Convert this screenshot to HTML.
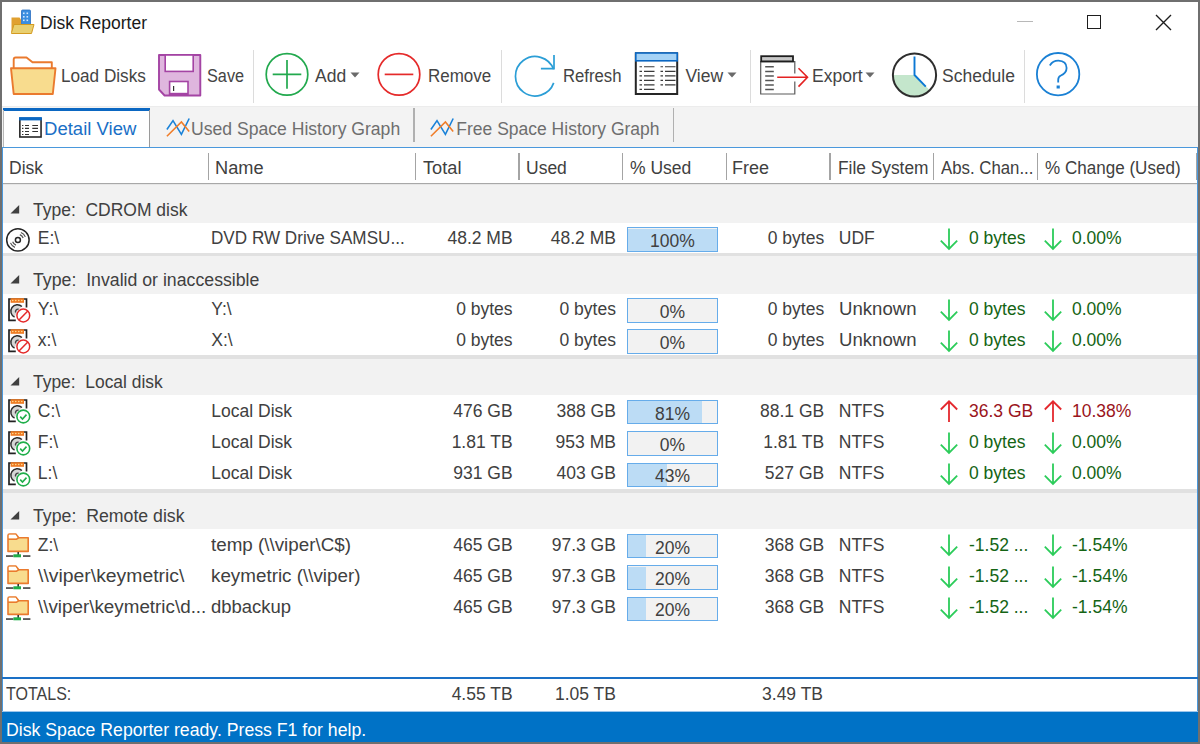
<!DOCTYPE html>
<html><head><meta charset="utf-8"><title>Disk Reporter</title>
<style>
html,body{margin:0;padding:0;}
body{width:1200px;height:744px;position:relative;overflow:hidden;background:#fff;font-family:"Liberation Sans",sans-serif;}
.t{position:absolute;white-space:pre;}
.r{position:absolute;}
svg.r{overflow:visible;}
</style></head><body>
<div class="r" style="left:0.00px;top:0.00px;width:1200.00px;height:744.00px;background:#ffffff;"></div>
<svg class="r" style="left:8px;top:6px" width="30" height="32" viewBox="0 0 30 32">
<rect x="13.5" y="4" width="9" height="19" rx="1" fill="#3a8ee0" stroke="#2a6fc0" stroke-width="0.8"/>
<g fill="#cfe6ff"><rect x="15" y="6.5" width="1.6" height="1.6"/><rect x="18.5" y="6.5" width="1.6" height="1.6"/>
<rect x="15" y="10" width="1.6" height="1.6"/><rect x="18.5" y="10" width="1.6" height="1.6"/>
<rect x="15" y="13.5" width="1.6" height="1.6"/><rect x="18.5" y="13.5" width="1.6" height="1.6"/></g>
<path d="M3.5 11.5 h8 l1.5 2 v13 h-9.5 z" fill="#e0a030"/>
<path d="M3.5 26.5 L6 18.5 H26 L23.5 27.5 H3.5 Z" fill="#e8cf70" stroke="#d49a20" stroke-width="1"/>
</svg>
<div class="t" style="left:40.00px;top:14.60px;font-size:17.5px;line-height:17.5px;color:#1a1a1a;">Disk Reporter</div>
<div class="r" style="left:1017.00px;top:21.00px;width:16.00px;height:1.20px;background:#b8b8b8;"></div>
<div class="r" style="left:1086.50px;top:14.50px;width:14.00px;height:14.00px;background:transparent;border:1.6px solid #1e1e1e;box-sizing:border-box;"></div>
<svg class="r" style="left:1155px;top:13.5px" width="17" height="17" viewBox="0 0 17 17"><path d="M1 1 L16 16 M16 1 L1 16" stroke="#1e1e1e" stroke-width="1.4"/></svg>
<svg class="r" style="left:5px;top:48px" width="56" height="52" viewBox="0 0 56 52">
<path d="M8.7 20 V11.5 q0 -2 2 -2 H21.5 L27.5 14.3 H46.8 V20" fill="#fff" stroke="#ea7a2e" stroke-width="1.9" stroke-linejoin="round"/>
<path d="M6 20.3 H50.5 L47.8 46 H8.7 Z" fill="#f8dc8e" stroke="#ea7a2e" stroke-width="1.9" stroke-linejoin="round"/>
</svg>
<div class="t" style="left:60.80px;top:68.20px;font-size:17.5px;line-height:17.5px;color:#444;transform:scaleX(0.98);transform-origin:left 0;">Load Disks</div>
<svg class="r" style="left:150px;top:48px" width="56" height="52" viewBox="0 0 56 52">
<path d="M9 7 H50.3 V47.5 H14.6 L9 41.5 Z" fill="#dfb6de" stroke="#a444a4" stroke-width="1.9" stroke-linejoin="round"/>
<rect x="15.2" y="7" width="28" height="16.4" fill="#fff" stroke="#a444a4" stroke-width="1.6"/>
<rect x="19.6" y="33.5" width="18.4" height="13.5" fill="#fff" stroke="#a444a4" stroke-width="1.6"/>
<rect x="19.6" y="44.8" width="18.4" height="2.6" fill="#a444a4"/>
<rect x="23" y="38" width="1.2" height="5" fill="#333"/>
</svg>
<div class="t" style="left:207.00px;top:68.20px;font-size:17.5px;line-height:17.5px;color:#444;transform:scaleX(0.93);transform-origin:left 0;">Save</div>
<div class="r" style="left:253.00px;top:50.00px;width:1.00px;height:53.00px;background:#dcdcdc;"></div>
<div class="r" style="left:501.00px;top:50.00px;width:1.00px;height:53.00px;background:#dcdcdc;"></div>
<div class="r" style="left:750.00px;top:50.00px;width:1.00px;height:53.00px;background:#dcdcdc;"></div>
<div class="r" style="left:1024.00px;top:50.00px;width:1.00px;height:53.00px;background:#dcdcdc;"></div>
<svg class="r" style="left:262px;top:50px" width="50" height="50" viewBox="0 0 50 50">
<circle cx="25" cy="24.4" r="20.8" fill="none" stroke="#22a94e" stroke-width="1.7"/>
<path d="M10.7 24.4 H39.3 M25 10 V38.7" stroke="#22a94e" stroke-width="1.7"/>
</svg>
<div class="t" style="left:315.00px;top:68.20px;font-size:17.5px;line-height:17.5px;color:#444;">Add</div>
<svg class="r" style="left:350px;top:72px" width="10" height="6" viewBox="0 0 10 6"><path d="M0.5 0.5 H9.5 L5 5.5 Z" fill="#6a6a6a"/></svg>
<svg class="r" style="left:374px;top:50px" width="50" height="50" viewBox="0 0 50 50">
<circle cx="25" cy="24.4" r="20.8" fill="none" stroke="#e52a2a" stroke-width="1.7"/>
<path d="M10.7 24.4 H39.3" stroke="#e52a2a" stroke-width="1.7"/>
</svg>
<div class="t" style="left:427.50px;top:68.20px;font-size:17.5px;line-height:17.5px;color:#444;transform:scaleX(0.97);transform-origin:left 0;">Remove</div>
<svg class="r" style="left:510px;top:50.7px" width="50" height="50" viewBox="0 0 50 50">
<path d="M43.6 18.3 A19.7 19.7 0 1 0 43.7 31.9" fill="none" stroke="#2b9ed6" stroke-width="1.7"/>
<path d="M44 3.9 V17.6 H30.9" fill="none" stroke="#2b9ed6" stroke-width="1.7"/>
</svg>
<div class="t" style="left:563.30px;top:68.20px;font-size:17.5px;line-height:17.5px;color:#444;transform:scaleX(0.955);transform-origin:left 0;">Refresh</div>
<svg class="r" style="left:630px;top:48px" width="54" height="52" viewBox="0 0 54 52">
<rect x="5.8" y="5.4" width="41.4" height="40.6" fill="#fff" stroke="#262626" stroke-width="2"/>
<rect x="5.8" y="5" width="41.4" height="7.8" fill="#a4d2f6" stroke="#0b67c2" stroke-width="1.6"/>
<g stroke="#3a3a3a" stroke-width="1.15">
<path d="M9.5 18.7 H12 M14 18.7 H24.5 M30.5 18.7 H33 M35 18.7 H45.5"/>
<path d="M9.5 23.4 H12 M14 23.4 H24.5 M30.5 23.4 H33 M35 23.4 H45.5"/>
<path d="M9.5 27.9 H12 M14 27.9 H24.5 M30.5 27.9 H33 M35 27.9 H45.5"/>
<path d="M9.5 32.4 H12 M14 32.4 H24.5 M30.5 32.4 H33 M35 32.4 H45.5"/>
<path d="M9.5 36.9 H12 M14 36.9 H24.5 M30.5 36.9 H33 M35 36.9 H45.5"/>
<path d="M9.5 41.4 H12 M14 41.4 H24.5"/>
</g>
</svg>
<div class="t" style="left:685.50px;top:68.20px;font-size:17.5px;line-height:17.5px;color:#444;">View</div>
<svg class="r" style="left:727px;top:72px" width="10" height="6" viewBox="0 0 10 6"><path d="M0.5 0.5 H9.5 L5 5.5 Z" fill="#6a6a6a"/></svg>
<svg class="r" style="left:752px;top:46px" width="60" height="54" viewBox="0 0 60 54">
<path d="M42.8 27.5 V15.6 H8.7 V48 H42.8 V35.4" fill="#fff" stroke="#5a5a5a" stroke-width="1.2"/>
<rect x="9.2" y="10.2" width="31.8" height="5.2" fill="#c8c8c8" stroke="#1e1e1e" stroke-width="1.8"/>
<g stroke="#555" stroke-width="1.5"><path d="M13.2 20.7 H21.8 M13.2 25.4 H21.8 M13.2 29.9 H21.8 M13.2 34.4 H21.8 M13.2 38.9 H21.8 M13.2 43.4 H21.8"/></g>
<path d="M25.2 31.2 H55.5 M46.5 22.3 L55.5 31.2 L46.5 40.6" fill="none" stroke="#e42222" stroke-width="1.6"/>
</svg>
<div class="t" style="left:812.00px;top:68.20px;font-size:17.5px;line-height:17.5px;color:#444;">Export</div>
<svg class="r" style="left:865px;top:72px" width="10" height="6" viewBox="0 0 10 6"><path d="M0.5 0.5 H9.5 L5 5.5 Z" fill="#6a6a6a"/></svg>
<svg class="r" style="left:888px;top:48px" width="54" height="54" viewBox="0 0 54 54">
<path d="M26.5 27 H4.9 A21.6 21.6 0 0 0 41.8 42.3 Z" fill="#c4e6cc"/>
<circle cx="26.5" cy="27" r="21.6" fill="none" stroke="#2e2e2e" stroke-width="2"/>
<path d="M26.5 8.5 V27 L37.8 38.7" fill="none" stroke="#0b78d4" stroke-width="1.9"/>
</svg>
<div class="t" style="left:942.00px;top:68.20px;font-size:17.5px;line-height:17.5px;color:#444;">Schedule</div>
<svg class="r" style="left:1032px;top:48px" width="54" height="54" viewBox="0 0 54 54">
<circle cx="26.1" cy="26.2" r="21.2" fill="none" stroke="#1a80d4" stroke-width="1.8"/>
<path d="M17.8 17.4 Q21 12.6 26.4 12.7 Q34.5 13 34.6 20 Q34.6 25 28.5 27.8 Q26.2 29 26.2 32 V34.5" fill="none" stroke="#1a80d4" stroke-width="1.8"/>
<rect x="24.6" y="37.5" width="3.2" height="3" fill="#1a80d4"/>
</svg>
<div class="r" style="left:2.00px;top:106.50px;width:1196.00px;height:41.00px;background:#f3f3f3;"></div>
<div class="r" style="left:2.00px;top:106.00px;width:1196.00px;height:1.00px;background:#ececec;"></div>
<div class="r" style="left:3.00px;top:108.00px;width:147.00px;height:40.00px;background:#ffffff;"></div>
<div class="r" style="left:3.00px;top:108.00px;width:147.00px;height:2.60px;background:#0b67c2;"></div>
<div class="r" style="left:3.00px;top:110.00px;width:1.00px;height:38.00px;background:#b8b8b8;"></div>
<div class="r" style="left:149.00px;top:110.00px;width:1.20px;height:38.00px;background:#9a9a9a;"></div>
<svg class="r" style="left:17px;top:115px" width="26" height="25" viewBox="0 0 26 25">
<rect x="2.85" y="3.6" width="21.2" height="18.4" fill="#fff" stroke="#262626" stroke-width="1.6"/>
<rect x="2.05" y="2.1" width="22.8" height="3.3" fill="#0b67c2"/>
<g stroke="#333" stroke-width="1.1">
<path d="M5 10.5 H6.4 M8 10.5 H12 M15.3 10.5 H21"/>
<path d="M5 13.4 H6.4 M8 13.4 H12 M15.3 13.4 H21"/>
<path d="M5 16.5 H6.4 M8 16.5 H12 M15.3 16.5 H21"/>
<path d="M5 19.5 H6.4 M8 19.5 H12"/>
</g>
</svg>
<div class="t" style="left:44.20px;top:120.60px;font-size:17.5px;line-height:17.5px;color:#1a6fc6;transform:scaleX(1.06);transform-origin:left 0;">Detail View</div>
<svg class="r" style="left:165px;top:118px" width="26" height="20" viewBox="0 0 26 20">
<path d="M1.9 11.5 L8 2.6 L16.4 16.3 L24.2 0.5" fill="none" stroke="#1a82d8" stroke-width="1.6"/>
<path d="M1.9 18.2 L16.4 4 L24.2 13.4" fill="none" stroke="#f07e2a" stroke-width="1.6"/>
</svg>
<div class="t" style="left:191.30px;top:120.60px;font-size:17.5px;line-height:17.5px;color:#6e6e6e;transform:scaleX(1.005);transform-origin:left 0;">Used Space History Graph</div>
<div class="r" style="left:413.40px;top:108.40px;width:1.40px;height:34.00px;background:#b0b0b0;"></div>
<svg class="r" style="left:429px;top:118px" width="26" height="20" viewBox="0 0 26 20">
<path d="M1.9 11.5 L8 2.6 L16.4 16.3 L24.2 0.5" fill="none" stroke="#1a82d8" stroke-width="1.6"/>
<path d="M1.9 18.2 L16.4 4 L24.2 13.4" fill="none" stroke="#f07e2a" stroke-width="1.6"/>
</svg>
<div class="t" style="left:456.30px;top:120.60px;font-size:17.5px;line-height:17.5px;color:#6e6e6e;transform:scaleX(1.0);transform-origin:left 0;">Free Space History Graph</div>
<div class="r" style="left:672.50px;top:108.40px;width:1.40px;height:34.00px;background:#b0b0b0;"></div>
<div class="r" style="left:2.00px;top:147.00px;width:1196.00px;height:531.00px;background:#ffffff;"></div>
<div class="r" style="left:2.00px;top:147.00px;width:1196.00px;height:1.20px;background:#4a98dc;"></div>
<div class="r" style="left:3.00px;top:183.00px;width:1194.00px;height:1.20px;background:#a8a8a8;"></div>
<div class="r" style="left:3.00px;top:184.20px;width:1194.00px;height:0.80px;background:#e6e6e6;"></div>
<div class="r" style="left:207.50px;top:153.00px;width:1.30px;height:26.50px;background:#a4a4a4;"></div>
<div class="r" style="left:414.80px;top:153.00px;width:1.30px;height:26.50px;background:#a4a4a4;"></div>
<div class="r" style="left:518.30px;top:153.00px;width:1.30px;height:26.50px;background:#a4a4a4;"></div>
<div class="r" style="left:622.00px;top:153.00px;width:1.30px;height:26.50px;background:#a4a4a4;"></div>
<div class="r" style="left:725.60px;top:153.00px;width:1.30px;height:26.50px;background:#a4a4a4;"></div>
<div class="r" style="left:829.40px;top:153.00px;width:1.30px;height:26.50px;background:#a4a4a4;"></div>
<div class="r" style="left:933.00px;top:153.00px;width:1.30px;height:26.50px;background:#a4a4a4;"></div>
<div class="r" style="left:1036.60px;top:153.00px;width:1.30px;height:26.50px;background:#a4a4a4;"></div>
<div class="r" style="left:1196.00px;top:153.00px;width:1.30px;height:26.50px;background:#a4a4a4;"></div>
<div class="t" style="left:9.00px;top:159.60px;font-size:17.5px;line-height:17.5px;color:#404040;">Disk</div>
<div class="t" style="left:214.50px;top:159.60px;font-size:17.5px;line-height:17.5px;color:#404040;transform:scaleX(1.04);transform-origin:left 0;">Name</div>
<div class="t" style="left:422.60px;top:159.60px;font-size:17.5px;line-height:17.5px;color:#404040;transform:scaleX(1.04);transform-origin:left 0;">Total</div>
<div class="t" style="left:526.00px;top:159.60px;font-size:17.5px;line-height:17.5px;color:#404040;">Used</div>
<div class="t" style="left:630.00px;top:159.60px;font-size:17.5px;line-height:17.5px;color:#404040;">% Used</div>
<div class="t" style="left:732.30px;top:159.60px;font-size:17.5px;line-height:17.5px;color:#404040;transform:scaleX(1.03);transform-origin:left 0;">Free</div>
<div class="t" style="left:837.50px;top:159.60px;font-size:17.5px;line-height:17.5px;color:#404040;transform:scaleX(0.99);transform-origin:left 0;">File System</div>
<div class="t" style="left:941.00px;top:159.60px;font-size:17.5px;line-height:17.5px;color:#404040;transform:scaleX(0.96);transform-origin:left 0;">Abs. Chan...</div>
<div class="t" style="left:1045.00px;top:159.60px;font-size:17.5px;line-height:17.5px;color:#404040;transform:scaleX(0.975);transform-origin:left 0;">% Change (Used)</div>
<div class="r" style="left:3.00px;top:184.60px;width:1194.00px;height:38.40px;background:#f2f2f2;"></div>
<svg class="r" style="left:9px;top:203.7px" width="12" height="10" viewBox="0 0 12 10"><path d="M10.2 1 V9.5 H1.5 Z" fill="#404040"/></svg>
<div class="t" style="left:32.90px;top:201.70px;font-size:17.5px;line-height:17.5px;color:#404040;transform:scaleX(0.999);transform-origin:left 0;">Type:  CDROM disk</div>
<svg class="r" style="left:5px;top:226.5px" width="26" height="26" viewBox="0 0 26 26">
<circle cx="12.9" cy="12.9" r="11.2" fill="#fff" stroke="#262626" stroke-width="1.5"/>
<circle cx="12.9" cy="12.9" r="2.5" fill="#fff" stroke="#262626" stroke-width="1.5"/>
<path d="M14.82 7.64 A5.6 5.6 0 0 1 18.16 10.98 M15.90 5.48 A8.0 8.0 0 0 1 20.32 9.90 M10.98 18.16 A5.6 5.6 0 0 1 7.64 14.82 M9.90 20.32 A8.0 8.0 0 0 1 5.48 15.90" fill="none" stroke="#555" stroke-width="1.2"/>
</svg>
<div class="t" style="left:37.80px;top:230.20px;font-size:17.5px;line-height:17.5px;color:#404040;">E:\</div>
<div class="t" style="left:211.30px;top:230.20px;font-size:17.5px;line-height:17.5px;color:#404040;transform:scaleX(0.978);transform-origin:left 0;">DVD RW Drive SAMSU...</div>
<div class="t" style="right:687.40px;top:230.20px;font-size:17.5px;line-height:17.5px;color:#404040;">48.2 MB</div>
<div class="t" style="right:584.10px;top:230.20px;font-size:17.5px;line-height:17.5px;color:#404040;">48.2 MB</div>
<div class="r" style="left:627.00px;top:227.40px;width:91.00px;height:24.60px;background:#f2f2f2;border:1.3px solid #66acea;box-sizing:border-box;"></div>
<div class="r" style="left:628.30px;top:228.70px;width:89.00px;height:22.00px;background:#bcdcf5;"></div>
<div class="t" style="left:472.50px;width:400px;text-align:center;top:233.20px;font-size:17.5px;line-height:17.5px;color:#404040;">100%</div>
<div class="t" style="right:375.80px;top:230.20px;font-size:17.5px;line-height:17.5px;color:#404040;">0 bytes</div>
<div class="t" style="left:838.80px;top:230.20px;font-size:17.5px;line-height:17.5px;color:#404040;">UDF</div>
<svg class="r" style="left:940.3px;top:228px" width="18" height="23" viewBox="0 0 18 23"><path d="M9 0.5 V21 M0.8 12.7 L9 20.9 L17.2 12.7" fill="none" stroke="#2ccc5a" stroke-width="1.8"/></svg>
<div class="t" style="left:969.00px;top:230.20px;font-size:17.5px;line-height:17.5px;color:#146414;">0 bytes</div>
<svg class="r" style="left:1043.8px;top:228px" width="18" height="23" viewBox="0 0 18 23"><path d="M9 0.5 V21 M0.8 12.7 L9 20.9 L17.2 12.7" fill="none" stroke="#2ccc5a" stroke-width="1.8"/></svg>
<div class="t" style="left:1072.00px;top:230.20px;font-size:17.5px;line-height:17.5px;color:#146414;">0.00%</div>
<div class="r" style="left:3.00px;top:252.50px;width:1194.00px;height:3.40px;background:#e1e1e1;"></div>
<div class="r" style="left:3.00px;top:255.90px;width:1194.00px;height:37.70px;background:#f2f2f2;"></div>
<svg class="r" style="left:9px;top:274.3px" width="12" height="10" viewBox="0 0 12 10"><path d="M10.2 1 V9.5 H1.5 Z" fill="#404040"/></svg>
<div class="t" style="left:32.90px;top:272.30px;font-size:17.5px;line-height:17.5px;color:#404040;transform:scaleX(1.012);transform-origin:left 0;">Type:  Invalid or inaccessible</div>
<svg class="r" style="left:2px;top:293.6px" width="32" height="32" viewBox="0 0 32 32">
<path d="M24.5 13.5 V5 H7 V26.3 H13.8" fill="none" stroke="#222" stroke-width="1.7"/>
<rect x="8.6" y="4.2" width="13.4" height="4.6" fill="#ee7a22"/>
<g fill="#ffe9a0"><circle cx="10.8" cy="6.5" r="0.7"/><circle cx="13.8" cy="6.5" r="0.7"/><circle cx="16.8" cy="6.5" r="0.7"/><circle cx="19.8" cy="6.5" r="0.7"/></g>
<path d="M19.9 12.6 A6.5 6.5 0 1 0 12.55 23.1 L15.3 17.2 Z" fill="#d6d6d6" stroke="none"/>
<path d="M19.9 12.6 A6.5 6.5 0 1 0 12.55 23.1" fill="none" stroke="#2a2a2a" stroke-width="1.4"/>
<path d="M16.6 15.2 A2.6 2.6 0 0 0 13.6 18.6" fill="none" stroke="#444" stroke-width="1.4"/>
<circle cx="21.3" cy="21.5" r="6.4" fill="#fff" stroke="#e42a2a" stroke-width="1.5"/><path d="M17 26 L25.8 17" stroke="#e42a2a" stroke-width="1.5"/>
</svg>
<div class="t" style="left:37.80px;top:300.80px;font-size:17.5px;line-height:17.5px;color:#404040;">Y:\</div>
<div class="t" style="left:211.30px;top:300.80px;font-size:17.5px;line-height:17.5px;color:#404040;">Y:\</div>
<div class="t" style="right:687.40px;top:300.80px;font-size:17.5px;line-height:17.5px;color:#404040;">0 bytes</div>
<div class="t" style="right:584.10px;top:300.80px;font-size:17.5px;line-height:17.5px;color:#404040;">0 bytes</div>
<div class="r" style="left:627.00px;top:298.00px;width:91.00px;height:24.60px;background:#f2f2f2;border:1.3px solid #66acea;box-sizing:border-box;"></div>
<div class="t" style="left:472.50px;width:400px;text-align:center;top:303.80px;font-size:17.5px;line-height:17.5px;color:#404040;">0%</div>
<div class="t" style="right:375.80px;top:300.80px;font-size:17.5px;line-height:17.5px;color:#404040;">0 bytes</div>
<div class="t" style="left:838.80px;top:300.80px;font-size:17.5px;line-height:17.5px;color:#404040;transform:scaleX(1.062);transform-origin:left 0;">Unknown</div>
<svg class="r" style="left:940.3px;top:298.6px" width="18" height="23" viewBox="0 0 18 23"><path d="M9 0.5 V21 M0.8 12.7 L9 20.9 L17.2 12.7" fill="none" stroke="#2ccc5a" stroke-width="1.8"/></svg>
<div class="t" style="left:969.00px;top:300.80px;font-size:17.5px;line-height:17.5px;color:#146414;">0 bytes</div>
<svg class="r" style="left:1043.8px;top:298.6px" width="18" height="23" viewBox="0 0 18 23"><path d="M9 0.5 V21 M0.8 12.7 L9 20.9 L17.2 12.7" fill="none" stroke="#2ccc5a" stroke-width="1.8"/></svg>
<div class="t" style="left:1072.00px;top:300.80px;font-size:17.5px;line-height:17.5px;color:#146414;">0.00%</div>
<svg class="r" style="left:2px;top:324.9px" width="32" height="32" viewBox="0 0 32 32">
<path d="M24.5 13.5 V5 H7 V26.3 H13.8" fill="none" stroke="#222" stroke-width="1.7"/>
<rect x="8.6" y="4.2" width="13.4" height="4.6" fill="#ee7a22"/>
<g fill="#ffe9a0"><circle cx="10.8" cy="6.5" r="0.7"/><circle cx="13.8" cy="6.5" r="0.7"/><circle cx="16.8" cy="6.5" r="0.7"/><circle cx="19.8" cy="6.5" r="0.7"/></g>
<path d="M19.9 12.6 A6.5 6.5 0 1 0 12.55 23.1 L15.3 17.2 Z" fill="#d6d6d6" stroke="none"/>
<path d="M19.9 12.6 A6.5 6.5 0 1 0 12.55 23.1" fill="none" stroke="#2a2a2a" stroke-width="1.4"/>
<path d="M16.6 15.2 A2.6 2.6 0 0 0 13.6 18.6" fill="none" stroke="#444" stroke-width="1.4"/>
<circle cx="21.3" cy="21.5" r="6.4" fill="#fff" stroke="#e42a2a" stroke-width="1.5"/><path d="M17 26 L25.8 17" stroke="#e42a2a" stroke-width="1.5"/>
</svg>
<div class="t" style="left:37.80px;top:332.10px;font-size:17.5px;line-height:17.5px;color:#404040;">x:\</div>
<div class="t" style="left:211.30px;top:332.10px;font-size:17.5px;line-height:17.5px;color:#404040;">X:\</div>
<div class="t" style="right:687.40px;top:332.10px;font-size:17.5px;line-height:17.5px;color:#404040;">0 bytes</div>
<div class="t" style="right:584.10px;top:332.10px;font-size:17.5px;line-height:17.5px;color:#404040;">0 bytes</div>
<div class="r" style="left:627.00px;top:329.30px;width:91.00px;height:24.60px;background:#f2f2f2;border:1.3px solid #66acea;box-sizing:border-box;"></div>
<div class="t" style="left:472.50px;width:400px;text-align:center;top:335.10px;font-size:17.5px;line-height:17.5px;color:#404040;">0%</div>
<div class="t" style="right:375.80px;top:332.10px;font-size:17.5px;line-height:17.5px;color:#404040;">0 bytes</div>
<div class="t" style="left:838.80px;top:332.10px;font-size:17.5px;line-height:17.5px;color:#404040;transform:scaleX(1.062);transform-origin:left 0;">Unknown</div>
<svg class="r" style="left:940.3px;top:329.9px" width="18" height="23" viewBox="0 0 18 23"><path d="M9 0.5 V21 M0.8 12.7 L9 20.9 L17.2 12.7" fill="none" stroke="#2ccc5a" stroke-width="1.8"/></svg>
<div class="t" style="left:969.00px;top:332.10px;font-size:17.5px;line-height:17.5px;color:#146414;">0 bytes</div>
<svg class="r" style="left:1043.8px;top:329.9px" width="18" height="23" viewBox="0 0 18 23"><path d="M9 0.5 V21 M0.8 12.7 L9 20.9 L17.2 12.7" fill="none" stroke="#2ccc5a" stroke-width="1.8"/></svg>
<div class="t" style="left:1072.00px;top:332.10px;font-size:17.5px;line-height:17.5px;color:#146414;">0.00%</div>
<div class="r" style="left:3.00px;top:355.40px;width:1194.00px;height:3.40px;background:#e1e1e1;"></div>
<div class="r" style="left:3.00px;top:358.80px;width:1194.00px;height:36.60px;background:#f2f2f2;"></div>
<svg class="r" style="left:9px;top:376.09999999999997px" width="12" height="10" viewBox="0 0 12 10"><path d="M10.2 1 V9.5 H1.5 Z" fill="#404040"/></svg>
<div class="t" style="left:32.90px;top:374.10px;font-size:17.5px;line-height:17.5px;color:#404040;transform:scaleX(0.995);transform-origin:left 0;">Type:  Local disk</div>
<svg class="r" style="left:2px;top:395.4px" width="32" height="32" viewBox="0 0 32 32">
<path d="M24.5 13.5 V5 H7 V26.3 H13.8" fill="none" stroke="#222" stroke-width="1.7"/>
<rect x="8.6" y="4.2" width="13.4" height="4.6" fill="#ee7a22"/>
<g fill="#ffe9a0"><circle cx="10.8" cy="6.5" r="0.7"/><circle cx="13.8" cy="6.5" r="0.7"/><circle cx="16.8" cy="6.5" r="0.7"/><circle cx="19.8" cy="6.5" r="0.7"/></g>
<path d="M19.9 12.6 A6.5 6.5 0 1 0 12.55 23.1 L15.3 17.2 Z" fill="#d6d6d6" stroke="none"/>
<path d="M19.9 12.6 A6.5 6.5 0 1 0 12.55 23.1" fill="none" stroke="#2a2a2a" stroke-width="1.4"/>
<path d="M16.6 15.2 A2.6 2.6 0 0 0 13.6 18.6" fill="none" stroke="#444" stroke-width="1.4"/>
<circle cx="21.3" cy="21.5" r="6.4" fill="#fff" stroke="#1fae4a" stroke-width="1.6"/><path d="M18.2 21.6 L20.5 24 L24.5 19.6" fill="none" stroke="#1fae4a" stroke-width="1.6"/>
</svg>
<div class="t" style="left:37.80px;top:402.60px;font-size:17.5px;line-height:17.5px;color:#404040;">C:\</div>
<div class="t" style="left:211.30px;top:402.60px;font-size:17.5px;line-height:17.5px;color:#404040;">Local Disk</div>
<div class="t" style="right:687.40px;top:402.60px;font-size:17.5px;line-height:17.5px;color:#404040;">476 GB</div>
<div class="t" style="right:584.10px;top:402.60px;font-size:17.5px;line-height:17.5px;color:#404040;">388 GB</div>
<div class="r" style="left:627.00px;top:399.80px;width:91.00px;height:24.60px;background:#f2f2f2;border:1.3px solid #66acea;box-sizing:border-box;"></div>
<div class="r" style="left:628.30px;top:401.10px;width:73.70px;height:22.00px;background:#bcdcf5;"></div>
<div class="t" style="left:472.50px;width:400px;text-align:center;top:405.60px;font-size:17.5px;line-height:17.5px;color:#404040;">81%</div>
<div class="t" style="right:375.80px;top:402.60px;font-size:17.5px;line-height:17.5px;color:#404040;">88.1 GB</div>
<div class="t" style="left:838.80px;top:402.60px;font-size:17.5px;line-height:17.5px;color:#404040;">NTFS</div>
<svg class="r" style="left:940.3px;top:400.4px" width="18" height="23" viewBox="0 0 18 23"><path d="M9 22 V1.5 M0.8 9.5 L9 1.3 L17.2 9.5" fill="none" stroke="#e4282e" stroke-width="1.8"/></svg>
<div class="t" style="left:969.00px;top:402.60px;font-size:17.5px;line-height:17.5px;color:#9a1420;">36.3 GB</div>
<svg class="r" style="left:1043.8px;top:400.4px" width="18" height="23" viewBox="0 0 18 23"><path d="M9 22 V1.5 M0.8 9.5 L9 1.3 L17.2 9.5" fill="none" stroke="#e4282e" stroke-width="1.8"/></svg>
<div class="t" style="left:1072.00px;top:402.60px;font-size:17.5px;line-height:17.5px;color:#9a1420;">10.38%</div>
<svg class="r" style="left:2px;top:426.8px" width="32" height="32" viewBox="0 0 32 32">
<path d="M24.5 13.5 V5 H7 V26.3 H13.8" fill="none" stroke="#222" stroke-width="1.7"/>
<rect x="8.6" y="4.2" width="13.4" height="4.6" fill="#ee7a22"/>
<g fill="#ffe9a0"><circle cx="10.8" cy="6.5" r="0.7"/><circle cx="13.8" cy="6.5" r="0.7"/><circle cx="16.8" cy="6.5" r="0.7"/><circle cx="19.8" cy="6.5" r="0.7"/></g>
<path d="M19.9 12.6 A6.5 6.5 0 1 0 12.55 23.1 L15.3 17.2 Z" fill="#d6d6d6" stroke="none"/>
<path d="M19.9 12.6 A6.5 6.5 0 1 0 12.55 23.1" fill="none" stroke="#2a2a2a" stroke-width="1.4"/>
<path d="M16.6 15.2 A2.6 2.6 0 0 0 13.6 18.6" fill="none" stroke="#444" stroke-width="1.4"/>
<circle cx="21.3" cy="21.5" r="6.4" fill="#fff" stroke="#1fae4a" stroke-width="1.6"/><path d="M18.2 21.6 L20.5 24 L24.5 19.6" fill="none" stroke="#1fae4a" stroke-width="1.6"/>
</svg>
<div class="t" style="left:37.80px;top:434.00px;font-size:17.5px;line-height:17.5px;color:#404040;">F:\</div>
<div class="t" style="left:211.30px;top:434.00px;font-size:17.5px;line-height:17.5px;color:#404040;">Local Disk</div>
<div class="t" style="right:687.40px;top:434.00px;font-size:17.5px;line-height:17.5px;color:#404040;">1.81 TB</div>
<div class="t" style="right:584.10px;top:434.00px;font-size:17.5px;line-height:17.5px;color:#404040;">953 MB</div>
<div class="r" style="left:627.00px;top:431.20px;width:91.00px;height:24.60px;background:#f2f2f2;border:1.3px solid #66acea;box-sizing:border-box;"></div>
<div class="t" style="left:472.50px;width:400px;text-align:center;top:437.00px;font-size:17.5px;line-height:17.5px;color:#404040;">0%</div>
<div class="t" style="right:375.80px;top:434.00px;font-size:17.5px;line-height:17.5px;color:#404040;">1.81 TB</div>
<div class="t" style="left:838.80px;top:434.00px;font-size:17.5px;line-height:17.5px;color:#404040;">NTFS</div>
<svg class="r" style="left:940.3px;top:431.8px" width="18" height="23" viewBox="0 0 18 23"><path d="M9 0.5 V21 M0.8 12.7 L9 20.9 L17.2 12.7" fill="none" stroke="#2ccc5a" stroke-width="1.8"/></svg>
<div class="t" style="left:969.00px;top:434.00px;font-size:17.5px;line-height:17.5px;color:#146414;">0 bytes</div>
<svg class="r" style="left:1043.8px;top:431.8px" width="18" height="23" viewBox="0 0 18 23"><path d="M9 0.5 V21 M0.8 12.7 L9 20.9 L17.2 12.7" fill="none" stroke="#2ccc5a" stroke-width="1.8"/></svg>
<div class="t" style="left:1072.00px;top:434.00px;font-size:17.5px;line-height:17.5px;color:#146414;">0.00%</div>
<svg class="r" style="left:2px;top:458.2px" width="32" height="32" viewBox="0 0 32 32">
<path d="M24.5 13.5 V5 H7 V26.3 H13.8" fill="none" stroke="#222" stroke-width="1.7"/>
<rect x="8.6" y="4.2" width="13.4" height="4.6" fill="#ee7a22"/>
<g fill="#ffe9a0"><circle cx="10.8" cy="6.5" r="0.7"/><circle cx="13.8" cy="6.5" r="0.7"/><circle cx="16.8" cy="6.5" r="0.7"/><circle cx="19.8" cy="6.5" r="0.7"/></g>
<path d="M19.9 12.6 A6.5 6.5 0 1 0 12.55 23.1 L15.3 17.2 Z" fill="#d6d6d6" stroke="none"/>
<path d="M19.9 12.6 A6.5 6.5 0 1 0 12.55 23.1" fill="none" stroke="#2a2a2a" stroke-width="1.4"/>
<path d="M16.6 15.2 A2.6 2.6 0 0 0 13.6 18.6" fill="none" stroke="#444" stroke-width="1.4"/>
<circle cx="21.3" cy="21.5" r="6.4" fill="#fff" stroke="#1fae4a" stroke-width="1.6"/><path d="M18.2 21.6 L20.5 24 L24.5 19.6" fill="none" stroke="#1fae4a" stroke-width="1.6"/>
</svg>
<div class="t" style="left:37.80px;top:465.40px;font-size:17.5px;line-height:17.5px;color:#404040;">L:\</div>
<div class="t" style="left:211.30px;top:465.40px;font-size:17.5px;line-height:17.5px;color:#404040;">Local Disk</div>
<div class="t" style="right:687.40px;top:465.40px;font-size:17.5px;line-height:17.5px;color:#404040;">931 GB</div>
<div class="t" style="right:584.10px;top:465.40px;font-size:17.5px;line-height:17.5px;color:#404040;">403 GB</div>
<div class="r" style="left:627.00px;top:462.60px;width:91.00px;height:24.60px;background:#f2f2f2;border:1.3px solid #66acea;box-sizing:border-box;"></div>
<div class="r" style="left:628.30px;top:463.90px;width:38.27px;height:22.00px;background:#bcdcf5;"></div>
<div class="t" style="left:472.50px;width:400px;text-align:center;top:468.40px;font-size:17.5px;line-height:17.5px;color:#404040;">43%</div>
<div class="t" style="right:375.80px;top:465.40px;font-size:17.5px;line-height:17.5px;color:#404040;">527 GB</div>
<div class="t" style="left:838.80px;top:465.40px;font-size:17.5px;line-height:17.5px;color:#404040;">NTFS</div>
<svg class="r" style="left:940.3px;top:463.2px" width="18" height="23" viewBox="0 0 18 23"><path d="M9 0.5 V21 M0.8 12.7 L9 20.9 L17.2 12.7" fill="none" stroke="#2ccc5a" stroke-width="1.8"/></svg>
<div class="t" style="left:969.00px;top:465.40px;font-size:17.5px;line-height:17.5px;color:#146414;">0 bytes</div>
<svg class="r" style="left:1043.8px;top:463.2px" width="18" height="23" viewBox="0 0 18 23"><path d="M9 0.5 V21 M0.8 12.7 L9 20.9 L17.2 12.7" fill="none" stroke="#2ccc5a" stroke-width="1.8"/></svg>
<div class="t" style="left:1072.00px;top:465.40px;font-size:17.5px;line-height:17.5px;color:#146414;">0.00%</div>
<div class="r" style="left:3.00px;top:489.30px;width:1194.00px;height:3.40px;background:#e1e1e1;"></div>
<div class="r" style="left:3.00px;top:492.70px;width:1194.00px;height:36.60px;background:#f2f2f2;"></div>
<svg class="r" style="left:9px;top:510.0px" width="12" height="10" viewBox="0 0 12 10"><path d="M10.2 1 V9.5 H1.5 Z" fill="#404040"/></svg>
<div class="t" style="left:32.90px;top:508.00px;font-size:17.5px;line-height:17.5px;color:#404040;transform:scaleX(1.012);transform-origin:left 0;">Type:  Remote disk</div>
<svg class="r" style="left:2px;top:529.3px" width="32" height="32" viewBox="0 0 32 32">
<path d="M6 22.4 V6.6 q0 -1.6 1.6 -1.6 H13.8 L16.8 8.7 H26.2 V22.4 Z" fill="#f8dc8e" stroke="#ea7a2e" stroke-width="1.6" stroke-linejoin="round"/>
<path d="M6.8 5.8 H13.6 L15.9 9.4 H6.8 Z" fill="#fff"/>
<path d="M6 10.2 H14.6 L16.8 8.7" fill="none" stroke="#ea7a2e" stroke-width="1.6" stroke-linejoin="round"/>
<rect x="15.4" y="23" width="1.6" height="3" fill="#333"/>
<rect x="4" y="26.3" width="7.4" height="1.5" fill="#333"/>
<rect x="21" y="26.3" width="7.4" height="1.5" fill="#333"/>
<rect x="11.4" y="25.3" width="7.6" height="3" fill="#1fae4a"/>
</svg>
<div class="t" style="left:37.80px;top:536.50px;font-size:17.5px;line-height:17.5px;color:#404040;">Z:\</div>
<div class="t" style="left:211.30px;top:536.50px;font-size:17.5px;line-height:17.5px;color:#404040;transform:scaleX(1.074);transform-origin:left 0;">temp (\\viper\C$)</div>
<div class="t" style="right:687.40px;top:536.50px;font-size:17.5px;line-height:17.5px;color:#404040;">465 GB</div>
<div class="t" style="right:584.10px;top:536.50px;font-size:17.5px;line-height:17.5px;color:#404040;">97.3 GB</div>
<div class="r" style="left:627.00px;top:533.70px;width:91.00px;height:24.60px;background:#f2f2f2;border:1.3px solid #66acea;box-sizing:border-box;"></div>
<div class="r" style="left:628.30px;top:535.00px;width:17.80px;height:22.00px;background:#bcdcf5;"></div>
<div class="t" style="left:472.50px;width:400px;text-align:center;top:539.50px;font-size:17.5px;line-height:17.5px;color:#404040;">20%</div>
<div class="t" style="right:375.80px;top:536.50px;font-size:17.5px;line-height:17.5px;color:#404040;">368 GB</div>
<div class="t" style="left:838.80px;top:536.50px;font-size:17.5px;line-height:17.5px;color:#404040;">NTFS</div>
<svg class="r" style="left:940.3px;top:534.3px" width="18" height="23" viewBox="0 0 18 23"><path d="M9 0.5 V21 M0.8 12.7 L9 20.9 L17.2 12.7" fill="none" stroke="#2ccc5a" stroke-width="1.8"/></svg>
<div class="t" style="left:969.00px;top:536.50px;font-size:17.5px;line-height:17.5px;color:#146414;">-1.52 ...</div>
<svg class="r" style="left:1043.8px;top:534.3px" width="18" height="23" viewBox="0 0 18 23"><path d="M9 0.5 V21 M0.8 12.7 L9 20.9 L17.2 12.7" fill="none" stroke="#2ccc5a" stroke-width="1.8"/></svg>
<div class="t" style="left:1072.00px;top:536.50px;font-size:17.5px;line-height:17.5px;color:#146414;">-1.54%</div>
<svg class="r" style="left:2px;top:560.8px" width="32" height="32" viewBox="0 0 32 32">
<path d="M6 22.4 V6.6 q0 -1.6 1.6 -1.6 H13.8 L16.8 8.7 H26.2 V22.4 Z" fill="#f8dc8e" stroke="#ea7a2e" stroke-width="1.6" stroke-linejoin="round"/>
<path d="M6.8 5.8 H13.6 L15.9 9.4 H6.8 Z" fill="#fff"/>
<path d="M6 10.2 H14.6 L16.8 8.7" fill="none" stroke="#ea7a2e" stroke-width="1.6" stroke-linejoin="round"/>
<rect x="15.4" y="23" width="1.6" height="3" fill="#333"/>
<rect x="4" y="26.3" width="7.4" height="1.5" fill="#333"/>
<rect x="21" y="26.3" width="7.4" height="1.5" fill="#333"/>
<rect x="11.4" y="25.3" width="7.6" height="3" fill="#1fae4a"/>
</svg>
<div class="t" style="left:37.80px;top:568.00px;font-size:17.5px;line-height:17.5px;color:#404040;transform:scaleX(1.107);transform-origin:left 0;">\\viper\keymetric\</div>
<div class="t" style="left:211.30px;top:568.00px;font-size:17.5px;line-height:17.5px;color:#404040;transform:scaleX(1.075);transform-origin:left 0;">keymetric (\\viper)</div>
<div class="t" style="right:687.40px;top:568.00px;font-size:17.5px;line-height:17.5px;color:#404040;">465 GB</div>
<div class="t" style="right:584.10px;top:568.00px;font-size:17.5px;line-height:17.5px;color:#404040;">97.3 GB</div>
<div class="r" style="left:627.00px;top:565.20px;width:91.00px;height:24.60px;background:#f2f2f2;border:1.3px solid #66acea;box-sizing:border-box;"></div>
<div class="r" style="left:628.30px;top:566.50px;width:17.80px;height:22.00px;background:#bcdcf5;"></div>
<div class="t" style="left:472.50px;width:400px;text-align:center;top:571.00px;font-size:17.5px;line-height:17.5px;color:#404040;">20%</div>
<div class="t" style="right:375.80px;top:568.00px;font-size:17.5px;line-height:17.5px;color:#404040;">368 GB</div>
<div class="t" style="left:838.80px;top:568.00px;font-size:17.5px;line-height:17.5px;color:#404040;">NTFS</div>
<svg class="r" style="left:940.3px;top:565.8px" width="18" height="23" viewBox="0 0 18 23"><path d="M9 0.5 V21 M0.8 12.7 L9 20.9 L17.2 12.7" fill="none" stroke="#2ccc5a" stroke-width="1.8"/></svg>
<div class="t" style="left:969.00px;top:568.00px;font-size:17.5px;line-height:17.5px;color:#146414;">-1.52 ...</div>
<svg class="r" style="left:1043.8px;top:565.8px" width="18" height="23" viewBox="0 0 18 23"><path d="M9 0.5 V21 M0.8 12.7 L9 20.9 L17.2 12.7" fill="none" stroke="#2ccc5a" stroke-width="1.8"/></svg>
<div class="t" style="left:1072.00px;top:568.00px;font-size:17.5px;line-height:17.5px;color:#146414;">-1.54%</div>
<svg class="r" style="left:2px;top:592.2px" width="32" height="32" viewBox="0 0 32 32">
<path d="M6 22.4 V6.6 q0 -1.6 1.6 -1.6 H13.8 L16.8 8.7 H26.2 V22.4 Z" fill="#f8dc8e" stroke="#ea7a2e" stroke-width="1.6" stroke-linejoin="round"/>
<path d="M6.8 5.8 H13.6 L15.9 9.4 H6.8 Z" fill="#fff"/>
<path d="M6 10.2 H14.6 L16.8 8.7" fill="none" stroke="#ea7a2e" stroke-width="1.6" stroke-linejoin="round"/>
<rect x="15.4" y="23" width="1.6" height="3" fill="#333"/>
<rect x="4" y="26.3" width="7.4" height="1.5" fill="#333"/>
<rect x="21" y="26.3" width="7.4" height="1.5" fill="#333"/>
<rect x="11.4" y="25.3" width="7.6" height="3" fill="#1fae4a"/>
</svg>
<div class="t" style="left:37.80px;top:599.40px;font-size:17.5px;line-height:17.5px;color:#404040;transform:scaleX(1.075);transform-origin:left 0;">\\viper\keymetric\d...</div>
<div class="t" style="left:211.30px;top:599.40px;font-size:17.5px;line-height:17.5px;color:#404040;transform:scaleX(1.055);transform-origin:left 0;">dbbackup</div>
<div class="t" style="right:687.40px;top:599.40px;font-size:17.5px;line-height:17.5px;color:#404040;">465 GB</div>
<div class="t" style="right:584.10px;top:599.40px;font-size:17.5px;line-height:17.5px;color:#404040;">97.3 GB</div>
<div class="r" style="left:627.00px;top:596.60px;width:91.00px;height:24.60px;background:#f2f2f2;border:1.3px solid #66acea;box-sizing:border-box;"></div>
<div class="r" style="left:628.30px;top:597.90px;width:17.80px;height:22.00px;background:#bcdcf5;"></div>
<div class="t" style="left:472.50px;width:400px;text-align:center;top:602.40px;font-size:17.5px;line-height:17.5px;color:#404040;">20%</div>
<div class="t" style="right:375.80px;top:599.40px;font-size:17.5px;line-height:17.5px;color:#404040;">368 GB</div>
<div class="t" style="left:838.80px;top:599.40px;font-size:17.5px;line-height:17.5px;color:#404040;">NTFS</div>
<svg class="r" style="left:940.3px;top:597.2px" width="18" height="23" viewBox="0 0 18 23"><path d="M9 0.5 V21 M0.8 12.7 L9 20.9 L17.2 12.7" fill="none" stroke="#2ccc5a" stroke-width="1.8"/></svg>
<div class="t" style="left:969.00px;top:599.40px;font-size:17.5px;line-height:17.5px;color:#146414;">-1.52 ...</div>
<svg class="r" style="left:1043.8px;top:597.2px" width="18" height="23" viewBox="0 0 18 23"><path d="M9 0.5 V21 M0.8 12.7 L9 20.9 L17.2 12.7" fill="none" stroke="#2ccc5a" stroke-width="1.8"/></svg>
<div class="t" style="left:1072.00px;top:599.40px;font-size:17.5px;line-height:17.5px;color:#146414;">-1.54%</div>
<div class="r" style="left:2.00px;top:147.00px;width:1.20px;height:531.00px;background:#4a98dc;"></div>
<div class="r" style="left:1196.80px;top:147.00px;width:1.20px;height:531.00px;background:#4a98dc;"></div>
<div class="r" style="left:2.00px;top:676.80px;width:1196.00px;height:2.00px;background:#1a70c6;"></div>
<div class="r" style="left:2.00px;top:678.80px;width:1196.00px;height:33.50px;background:#ffffff;"></div>
<div class="r" style="left:2.00px;top:678.80px;width:1.00px;height:33.00px;background:#4a98dc;"></div>
<div class="r" style="left:1197.00px;top:678.80px;width:1.00px;height:33.00px;background:#4a98dc;"></div>
<div class="r" style="left:2.00px;top:710.60px;width:1196.00px;height:1.60px;background:#9cc6ec;"></div>
<div class="t" style="left:6.30px;top:686.00px;font-size:17.5px;line-height:17.5px;color:#404040;transform:scaleX(0.915);transform-origin:left 0;">TOTALS:</div>
<div class="t" style="right:687.40px;top:686.00px;font-size:17.5px;line-height:17.5px;color:#404040;">4.55 TB</div>
<div class="t" style="right:584.10px;top:686.00px;font-size:17.5px;line-height:17.5px;color:#404040;">1.05 TB</div>
<div class="t" style="right:377.00px;top:686.00px;font-size:17.5px;line-height:17.5px;color:#404040;">3.49 TB</div>
<div class="r" style="left:2.00px;top:712.20px;width:1196.00px;height:30.30px;background:#0072c6;"></div>
<div class="t" style="left:6.30px;top:722.00px;font-size:17.5px;line-height:17.5px;color:#ffffff;transform:scaleX(1.01);transform-origin:left 0;">Disk Space Reporter ready. Press F1 for help.</div>
<div class="r" style="left:0.00px;top:0.00px;width:1200.00px;height:1.80px;background:#6f6f6f;"></div>
<div class="r" style="left:0.00px;top:0.00px;width:1.80px;height:744.00px;background:#6f6f6f;"></div>
<div class="r" style="left:1198.20px;top:0.00px;width:1.80px;height:744.00px;background:#6f6f6f;"></div>
<div class="r" style="left:0.00px;top:742.30px;width:1200.00px;height:1.70px;background:#6f6f6f;"></div>
</body></html>
